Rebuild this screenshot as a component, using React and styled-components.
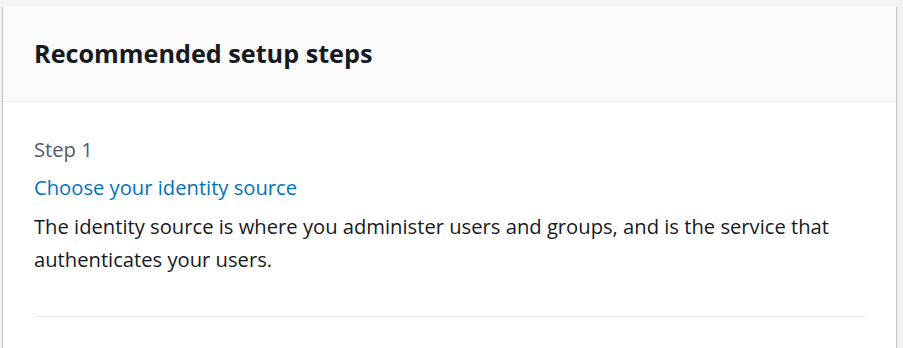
import styled, { createGlobalStyle } from "styled-components";

const Global = createGlobalStyle`
  body {
    margin: 0;
    background-color: #f2f3f3;
    font-family: "Open Sans", "Noto Sans", sans-serif;
  }
`;

const Page = styled.div`
  padding: 6px 7px 0 3px;
  height: 348px;
  box-sizing: border-box;
  overflow: hidden;
`;

const Card = styled.div`
  background-color: white;
  height: 400px;
  box-shadow: 0 1px 1px 0 rgba(0, 28, 36, 0.3), 1px 1px 1px 0 rgba(0, 28, 36, 0.15),
    -1px 1px 1px 0 rgba(0, 28, 36, 0.15);
`;

const Header = styled.div`
  background-color: #fafafa;
  border-bottom: 1px solid #eaeded;
  height: 96px;
  display: flex;
  align-items: center;
  padding: 0 31px;
  box-sizing: border-box;
`;

const Title = styled.h2`
  margin: 0 0 2px;
  font-size: 25.2px;
  font-weight: 700;
  color: #16191f;
`;

const Body = styled.div`
  padding: 31px 30px 0 31px;
`;

const Step = styled.div`
  padding-bottom: 40px;
  border-bottom: 1px solid #eaeded;
`;

const Label = styled.div`
  font-size: 20.2px;
  line-height: 32px;
  color: #545b64;
`;

const Link = styled.a`
  display: block;
  margin-top: 6px;
  font-size: 20.2px;
  line-height: 32px;
  color: #0073bb;
  text-decoration: none;
`;

const Text = styled.p`
  margin: 7px 0 0;
  font-size: 20.2px;
  line-height: 33px;
  color: #16191f;
`;

function App() {
  return (
    <Page>
      <Global />
      <Card>
        <Header>
          <Title>Recommended setup steps</Title>
        </Header>
        <Body>
          <Step>
            <Label>Step 1</Label>
            <Link href="#">Choose your identity source</Link>
            <Text>
              The identity source is where you administer users and groups, and is the service that
              authenticates your users.
            </Text>
          </Step>
        </Body>
      </Card>
    </Page>
  );
}

export default App;
